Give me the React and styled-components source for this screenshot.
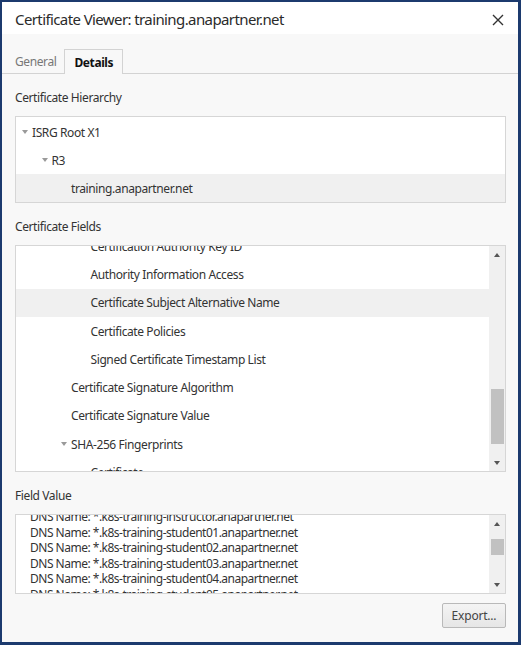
import React from "react";
import styled, { createGlobalStyle, css } from "styled-components";

const Global = createGlobalStyle`
  html, body { margin: 0; padding: 0; background: #fff; }
  * { box-sizing: border-box; }
  body { font-family: "Noto Sans", "Open Sans", sans-serif; }
`;

const uiText = css`
  font-family: "Noto Sans", "Open Sans", sans-serif;
  font-size: 12px;
  letter-spacing: -0.4px;
`;

const Frame = styled.div`
  width: 521px;
  height: 645px;
  border: 2px solid #1c3a6e;
  border-right-width: 3px;
  border-bottom-width: 3px;
  display: flex;
  flex-direction: column;
  background: #f8f8f8;
`;

const TitleBar = styled.div`
  height: 32px;
  background: #fff;
  display: flex;
  align-items: center;
  justify-content: space-between;
  padding: 0 12px 0 13px;
`;

const Title = styled.div`
  font-size: 15px;
  letter-spacing: -0.6px;
  color: #2b2b2b;
  margin-top: 2px;
`;

const CloseButton = styled.button`
  width: 16px;
  height: 16px;
  border: 0;
  padding: 0;
  background: transparent;
  display: flex;
  align-items: center;
  justify-content: center;
  margin-top: 3px;
`;

const Body = styled.div`
  flex: 1;
  display: flex;
  flex-direction: column;
  padding-top: 15px;
`;

const TabStrip = styled.div`
  display: flex;
  align-items: flex-end;
  height: 25px;
  border-bottom: 1px solid #d3d3d3;
  padding-left: 13px;
`;

const Tab = styled.div`
  ${uiText};
  height: ${(p) => (p.$active ? "25px" : "24px")};
  padding: 0 ${(p) => (p.$active ? "9px" : "8px")} 0 ${(p) => (p.$active ? "9px" : "0")};
  margin-bottom: ${(p) => (p.$active ? "-1px" : "0")};
  display: flex;
  align-items: center;
  font-weight: ${(p) => (p.$active ? 700 : 400)};
  color: ${(p) => (p.$active ? "#111" : "#777")};
  background: ${(p) => (p.$active ? "#f8f8f8" : "transparent")};
  border: ${(p) => (p.$active ? "1px solid #d3d3d3" : "0")};
  border-bottom: 0;
`;

const Content = styled.div`
  flex: 1;
  display: flex;
  flex-direction: column;
  padding: 0 12px 0 13px;
`;

const Label = styled.div`
  ${uiText};
  height: 20px;
  margin-top: 13px;
  margin-bottom: 9px;
  display: flex;
  align-items: center;
  color: #333;
`;

const Box = styled.div`
  height: ${(p) => p.$h}px;
  background: #fff;
  border: 1px solid #d6d6d6;
  display: flex;
  overflow: hidden;
  padding-top: ${(p) => p.$pt || 0}px;
`;

const Viewport = styled.div`
  flex: 1;
  overflow: hidden;
  min-width: 0;
`;

const List = styled.div`
  margin-top: ${(p) => p.$offset || 0}px;
  display: flex;
  flex-direction: column;
`;

const Row = styled.div`
  ${uiText};
  height: ${(p) => p.$h}px;
  flex: none;
  display: flex;
  align-items: center;
  padding-left: ${(p) => 16 + p.$level * 19.5}px;
  background: ${(p) => (p.$selected ? "#f0f0f0" : "transparent")};
  color: #333;
  white-space: nowrap;
`;

const Twisty = styled.span`
  width: 10px;
  height: 10px;
  margin-left: -10px;
  display: inline-flex;
  align-items: center;
  justify-content: flex-start;
  &::before {
    content: "";
    border-left: 3.5px solid transparent;
    border-right: 3.5px solid transparent;
    border-top: 4px solid #9a9a9a;
  }
`;

const ValueLines = styled.div`
  margin-top: ${(p) => p.$offset}px;
  padding-left: 14px;
  font-family: "Noto Sans", "Open Sans", sans-serif;
  font-size: 12px;
  letter-spacing: -0.5px;
  line-height: 15.5px;
  color: #333;
  white-space: nowrap;
`;

const Scrollbar = styled.div`
  width: 16px;
  flex: none;
  background: #f0f0f0;
  display: flex;
  flex-direction: column;
  align-items: center;
`;

const Arrow = styled.div`
  height: 17px;
  flex: none;
  display: flex;
  align-items: center;
  justify-content: center;
  &::before {
    content: "";
    border-left: 3.5px solid transparent;
    border-right: 3.5px solid transparent;
    ${(p) => (p.$up ? "border-bottom: 4px solid #555;" : "border-top: 4px solid #555;")}
  }
`;

const Track = styled.div`
  flex: 1;
  width: 100%;
  display: flex;
  flex-direction: column;
  padding-top: ${(p) => p.$pos}px;
  align-items: center;
`;

const Thumb = styled.div`
  width: 13px;
  height: ${(p) => p.$size}px;
  background: #c1c1c1;
`;

const Footer = styled.div`
  display: flex;
  justify-content: flex-end;
  padding-top: 9px;
`;

const Button = styled.button`
  ${uiText};
  letter-spacing: -0.2px;
  width: 64px;
  height: 25px;
  border: 1px solid #b9b9b9;
  border-radius: 2px;
  background: linear-gradient(#f4f4f4, #e6e6e6);
  color: #444;
  padding: 0;
`;

const hierarchy = [
  { text: "ISRG Root X1", level: 0, twisty: true },
  { text: "R3", level: 1, twisty: true },
  { text: "training.anapartner.net", level: 2, selected: true },
];

const fields = [
  { text: "Certification Authority Key ID", level: 3 },
  { text: "Authority Information Access", level: 3 },
  { text: "Certificate Subject Alternative Name", level: 3, selected: true },
  { text: "Certificate Policies", level: 3 },
  { text: "Signed Certificate Timestamp List", level: 3 },
  { text: "Certificate Signature Algorithm", level: 2 },
  { text: "Certificate Signature Value", level: 2 },
  { text: "SHA-256 Fingerprints", level: 2, twisty: true },
  { text: "Certificate", level: 3 },
  { text: "Public Key", level: 3 },
];

const values = [
  "DNS Name: *.k8s-training-instructor.anapartner.net",
  "DNS Name: *.k8s-training-student01.anapartner.net",
  "DNS Name: *.k8s-training-student02.anapartner.net",
  "DNS Name: *.k8s-training-student03.anapartner.net",
  "DNS Name: *.k8s-training-student04.anapartner.net",
  "DNS Name: *.k8s-training-student05.anapartner.net",
];

function Tree({ items, rowH }) {
  return items.map((it) => (
    <Row key={it.text} $level={it.level} $selected={it.selected} $h={rowH}>
      {it.twisty && <Twisty />}
      {it.text}
    </Row>
  ));
}

export default function App() {
  return (
    <>
      <Global />
      <Frame>
        <TitleBar>
          <Title>Certificate Viewer: training.anapartner.net</Title>
          <CloseButton aria-label="Close">
            <svg width="12" height="12" viewBox="0 0 12 12">
              <path d="M1 1L11 11M11 1L1 11" stroke="#333" strokeWidth="1.4" />
            </svg>
          </CloseButton>
        </TitleBar>
        <Body>
          <TabStrip>
            <Tab>General</Tab>
            <Tab $active>Details</Tab>
          </TabStrip>
          <Content>
            <Label>Certificate Hierarchy</Label>
            <Box $h={87} $pt={1}>
              <Viewport>
                <List>
                  <Tree items={hierarchy} rowH={28} />
                </List>
              </Viewport>
            </Box>

            <Label>Certificate Fields</Label>
            <Box $h={227}>
              <Viewport>
                <List $offset={-14}>
                  <Tree items={fields} rowH={28.3} />
                </List>
              </Viewport>
              <Scrollbar>
                <Arrow $up />
                <Track $pos={126}>
                  <Thumb $size={55} />
                </Track>
                <Arrow />
              </Scrollbar>
            </Box>

            <Label>Field Value</Label>
            <Box $h={80}>
              <Viewport>
                <ValueLines $offset={-6}>
                  {values.map((v) => (
                    <div key={v}>{v}</div>
                  ))}
                </ValueLines>
              </Viewport>
              <Scrollbar>
                <Arrow $up />
                <Track $pos={7}>
                  <Thumb $size={16} />
                </Track>
                <Arrow />
              </Scrollbar>
            </Box>
            <Footer>
              <Button>Export...</Button>
            </Footer>
          </Content>
        </Body>
      </Frame>
    </>
  );
}
